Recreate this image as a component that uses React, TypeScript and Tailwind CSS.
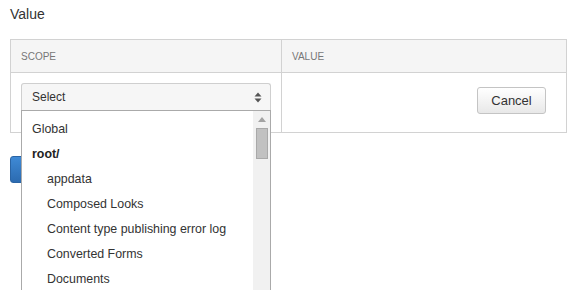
const items = [
    { label: 'Global', indent: false, bold: false },
    { label: 'root/', indent: false, bold: true },
    { label: 'appdata', indent: true, bold: false },
    { label: 'Composed Looks', indent: true, bold: false },
    { label: 'Content type publishing error log', indent: true, bold: false },
    { label: 'Converted Forms', indent: true, bold: false },
    { label: 'Documents', indent: true, bold: false },
];

const SortArrows = () => (
    <svg width="8" height="11" viewBox="0 0 8 11" className="text-[#555]">
        <path d="M4 0.5 L7.5 4.5 H0.5 Z" fill="currentColor" />
        <path d="M4 10.5 L7.5 6.5 H0.5 Z" fill="currentColor" />
    </svg>
);

export default function App() {
    return (
        <div
            className="relative h-[290px] w-[571px] overflow-hidden bg-white px-[10px] pt-[4px] text-[#333]"
            style={{ fontFamily: '"Liberation Sans", Arial, sans-serif' }}
        >
            <h2 className="text-[14px] leading-[20px]">Value</h2>

            <table className="mt-[15px] w-[557px] border-collapse border border-[#d2d2d2]">
                <thead>
                    <tr className="h-[33px] bg-[#f5f5f5]">
                        <th className="w-[271px] border-r border-b border-[#d2d2d2] px-[10px] text-left text-[10px] font-normal text-[#777]">
                            SCOPE
                        </th>
                        <th className="border-b border-[#d2d2d2] px-[10px] text-left text-[10px] font-normal text-[#777]">
                            VALUE
                        </th>
                    </tr>
                </thead>
                <tbody>
                    <tr className="h-[60px]">
                        <td className="border-r border-[#d2d2d2] px-[10px] align-top pt-[10px]">
                            <div className="relative">
                                <div className="flex h-[27px] w-[250px] items-center justify-between rounded-t-[3px] border border-b-0 border-[#cfcfcf] bg-[#f6f6f6] pl-[10px] pr-[8px] text-[12px]">
                                    <span>Select</span>
                                    <SortArrows />
                                </div>
                                <div className="absolute left-0 top-[27px] z-10 flex h-[200px] w-[250px] border border-[#aaa] bg-white">
                                    <ul className="flex-1 pt-[6px] text-[12.4px]">
                                        {items.map((it) => (
                                            <li
                                                key={it.label}
                                                className={`flex h-[25px] items-center whitespace-nowrap ${it.indent ? 'pl-[25px]' : 'pl-[10px]'} ${it.bold ? 'font-bold text-[#222]' : ''}`}
                                            >
                                                {it.label}
                                            </li>
                                        ))}
                                    </ul>
                                    <div className="flex w-[17px] flex-col items-center bg-[#f1f1f1]">
                                        <svg width="8" height="5" viewBox="0 0 8 5" className="mt-[6px]">
                                            <path d="M4 0 L8 5 H0 Z" fill="#a3a3a3" />
                                        </svg>
                                        <div className="mt-[6px] h-[31px] w-[12px] border border-[#a9a9a9] bg-[#c1c1c1]" />
                                    </div>
                                </div>
                            </div>
                        </td>
                        <td className="px-[20px] pt-[14px] align-top">
                            <div className="flex justify-end">
                                <button className="h-[27px] w-[69px] rounded-[3px] border border-[#c4c4c4] bg-gradient-to-b from-white to-[#e8e8e8] text-[13px] text-[#333]">
                                    Cancel
                                </button>
                            </div>
                        </td>
                    </tr>
                </tbody>
            </table>

            <div className="mt-[23px]">
                <button className="h-[27px] w-[60px] rounded-[3px] border border-[#2a64a4] bg-gradient-to-b from-[#3f8ad6] to-[#2c6bb0] text-[13px] text-white">
                    Save
                </button>
            </div>
        </div>
    );
}
